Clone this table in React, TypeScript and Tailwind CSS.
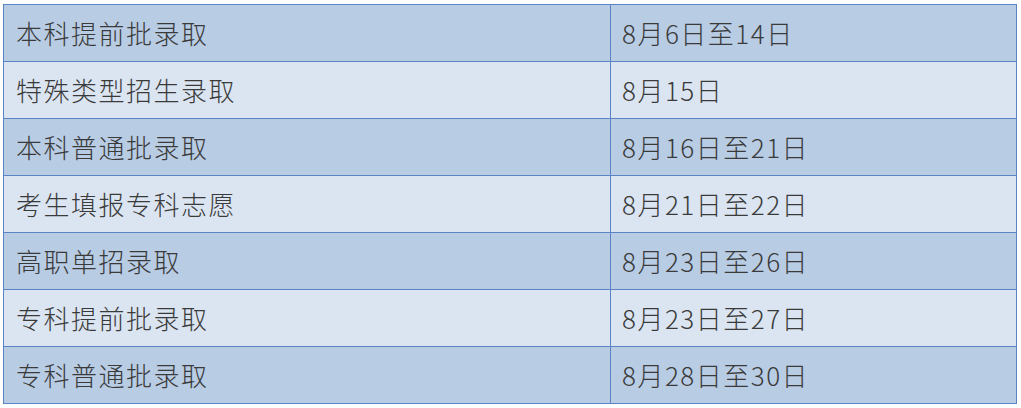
import React from "react";

const rows: [string, string][] = [
  ["本科提前批录取", "8月6日至14日"],
  ["特殊类型招生录取", "8月15日"],
  ["本科普通批录取", "8月16日至21日"],
  ["考生填报专科志愿", "8月21日至22日"],
  ["高职单招录取", "8月23日至26日"],
  ["专科提前批录取", "8月23日至27日"],
  ["专科普通批录取", "8月28日至30日"],
];

export default function App() {
  return (
    <div className="w-[1021px] h-[408px] bg-white pt-[4px] pl-[3px]">
      <table
        className="border-collapse w-[1014px] text-[#3a3a3a] text-[26px] tracking-[1.5px] font-light"
        style={{ fontFamily: '"Noto Sans CJK SC", "Noto Sans", sans-serif' }}
      >
        <tbody>
          {rows.map(([name, date], i) => (
            <tr key={name} className={i % 2 === 0 ? "bg-[#b8cce4]" : "bg-[#dbe5f1]"}>
              <td className="h-[57px] w-[607px] border border-[#5b84c4] pl-[12px] leading-none">
                {name}
              </td>
              <td className="h-[57px] border border-[#5b84c4] pl-[11px] leading-none">
                {date}
              </td>
            </tr>
          ))}
        </tbody>
      </table>
    </div>
  );
}
